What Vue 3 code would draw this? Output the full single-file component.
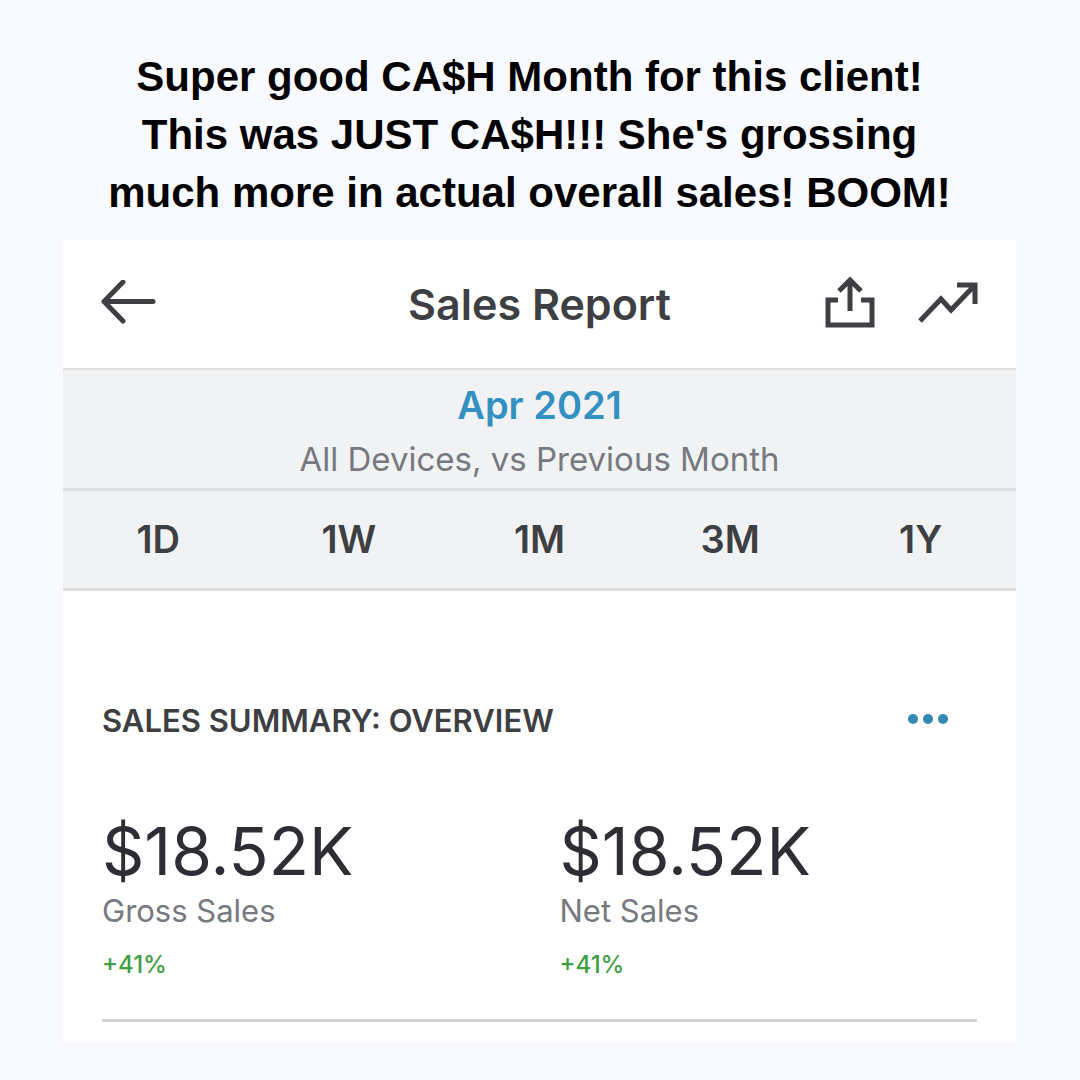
<script setup>
const ranges = ['1D', '1W', '1M', '3M', '1Y']
const metrics = [
  { label: 'Gross Sales', value: '$18.52K', change: '+41%' },
  { label: 'Net Sales', value: '$18.52K', change: '+41%' },
]
</script>

<template>
  <main class="page">
    <h1 class="caption">
      Super good CA$H Month for this client!<br />
      This was JUST CA$H!!! She's grossing<br />
      much more in actual overall sales! BOOM!
    </h1>

    <section class="card">
      <header class="topbar">
        <button class="icon-button" type="button" aria-label="Back">
          <svg width="56" height="44" viewBox="0 0 56 44">
            <path d="M22 2 3 21.500l19 19.500M3 21.500h49" stroke-linecap="round" stroke-linejoin="round" />
          </svg>
        </button>
        <h2 class="title">Sales Report</h2>
        <div class="actions">
          <button class="icon-button" type="button" aria-label="Share">
            <svg width="50" height="52" viewBox="0 0 50 52">
              <path d="M13 24H3v25h44V24H36" />
              <path d="M25 35V4M14 15 25 4l11 11" />
            </svg>
          </button>
          <button class="icon-button" type="button" aria-label="Trends">
            <svg width="60" height="52" viewBox="0 0 60 52">
              <path d="M2 45 23 23l10 11L57 9M39 9h18v19" />
            </svg>
          </button>
        </div>
      </header>

      <div class="period">
        <button class="period-button" type="button">Apr 2021</button>
        <p class="period-note">All Devices, vs Previous Month</p>
      </div>

      <nav class="ranges" aria-label="Date range">
        <button v-for="range in ranges" :key="range" class="range" type="button">{{ range }}</button>
      </nav>

      <section class="summary">
        <div class="summary-head">
          <h3 class="summary-title">SALES SUMMARY: OVERVIEW</h3>
          <button class="icon-button more" type="button" aria-label="More options">
            <svg width="40" height="12" viewBox="0 0 40 12">
              <circle cx="5" cy="6" r="5" />
              <circle cx="20" cy="6" r="5" />
              <circle cx="35" cy="6" r="5" />
            </svg>
          </button>
        </div>
        <div class="metrics">
          <div v-for="metric in metrics" :key="metric.label" class="metric">
            <p class="value">{{ metric.value }}</p>
            <p class="label">{{ metric.label }}</p>
            <p class="change">{{ metric.change }}</p>
          </div>
        </div>
      </section>
    </section>
  </main>
</template>

<style>
body {
  background: #f9faff;
}
</style>

<style scoped>
.page {
  box-sizing: border-box;
  padding: 48px 64px 39px 63px;
  font-family: Inter, "Liberation Sans", sans-serif;
  color: #3d3f43;
}

h1,
h2,
h3,
p {
  margin: 0;
}

button {
  padding: 0;
  border: 0;
  background: none;
  color: inherit;
  font: inherit;
  cursor: pointer;
}

.caption {
  padding-right: 20px;
  margin-bottom: 18px;
  font-family: "Liberation Sans", Arial, sans-serif;
  font-size: 42px;
  font-weight: 700;
  line-height: 58px;
  text-align: center;
  color: #000;
}

.card {
  background: #fff;
  padding-bottom: 19px;
}

.topbar {
  display: grid;
  grid-template-columns: 1fr auto 1fr;
  align-items: center;
  height: 128px;
  padding: 0 38px;
}

.icon-button {
  display: flex;
  justify-self: start;
  padding-bottom: 5px;
  fill: none;
  stroke: #3d3f43;
  stroke-width: 5px;
}

.title {
  font-size: 43px;
  font-weight: 600;
  line-height: 52px;
}

.actions {
  display: flex;
  justify-content: flex-end;
  gap: 43px;
}

.period {
  display: flex;
  flex-direction: column;
  align-items: center;
  gap: 2px;
  padding: 9px 0 3px;
  border-top: 2px solid #e0e0e1;
  background: #f1f2f4;
}

.period-button {
  font-size: 38px;
  font-weight: 600;
  line-height: 52px;
  color: #3390c0;
}

.period-note {
  font-size: 33px;
  line-height: 52px;
  color: #77797e;
}

.ranges {
  display: grid;
  grid-template-columns: repeat(5, 1fr);
  border-top: 3px solid #dfe0e2;
  border-bottom: 3px solid #dfe0e2;
  background: #f1f2f4;
}

.range {
  font-size: 38px;
  font-weight: 600;
  line-height: 97px;
}

.summary {
  margin: 110px 39px 0;
  border-bottom: 3px solid #d3d3d4;
}

.summary-head {
  display: flex;
  align-items: center;
  justify-content: space-between;
  padding-right: 29px;
}

.summary-title {
  font-size: 31px;
  font-weight: 600;
  line-height: 40px;
}

.more {
  fill: #3389b2;
  stroke: none;
}

.metrics {
  display: grid;
  grid-template-columns: 1fr 1fr;
  gap: 40px;
  padding: 70px 0 36px;
}

.value {
  font-size: 66px;
  line-height: 80px;
  color: #2c2e33;
}

.label {
  font-size: 31px;
  line-height: 40px;
  color: #77797e;
}

.change {
  margin-top: 16px;
  font-size: 24px;
  font-weight: 500;
  line-height: 36px;
  color: #3f9f43;
}
</style>
